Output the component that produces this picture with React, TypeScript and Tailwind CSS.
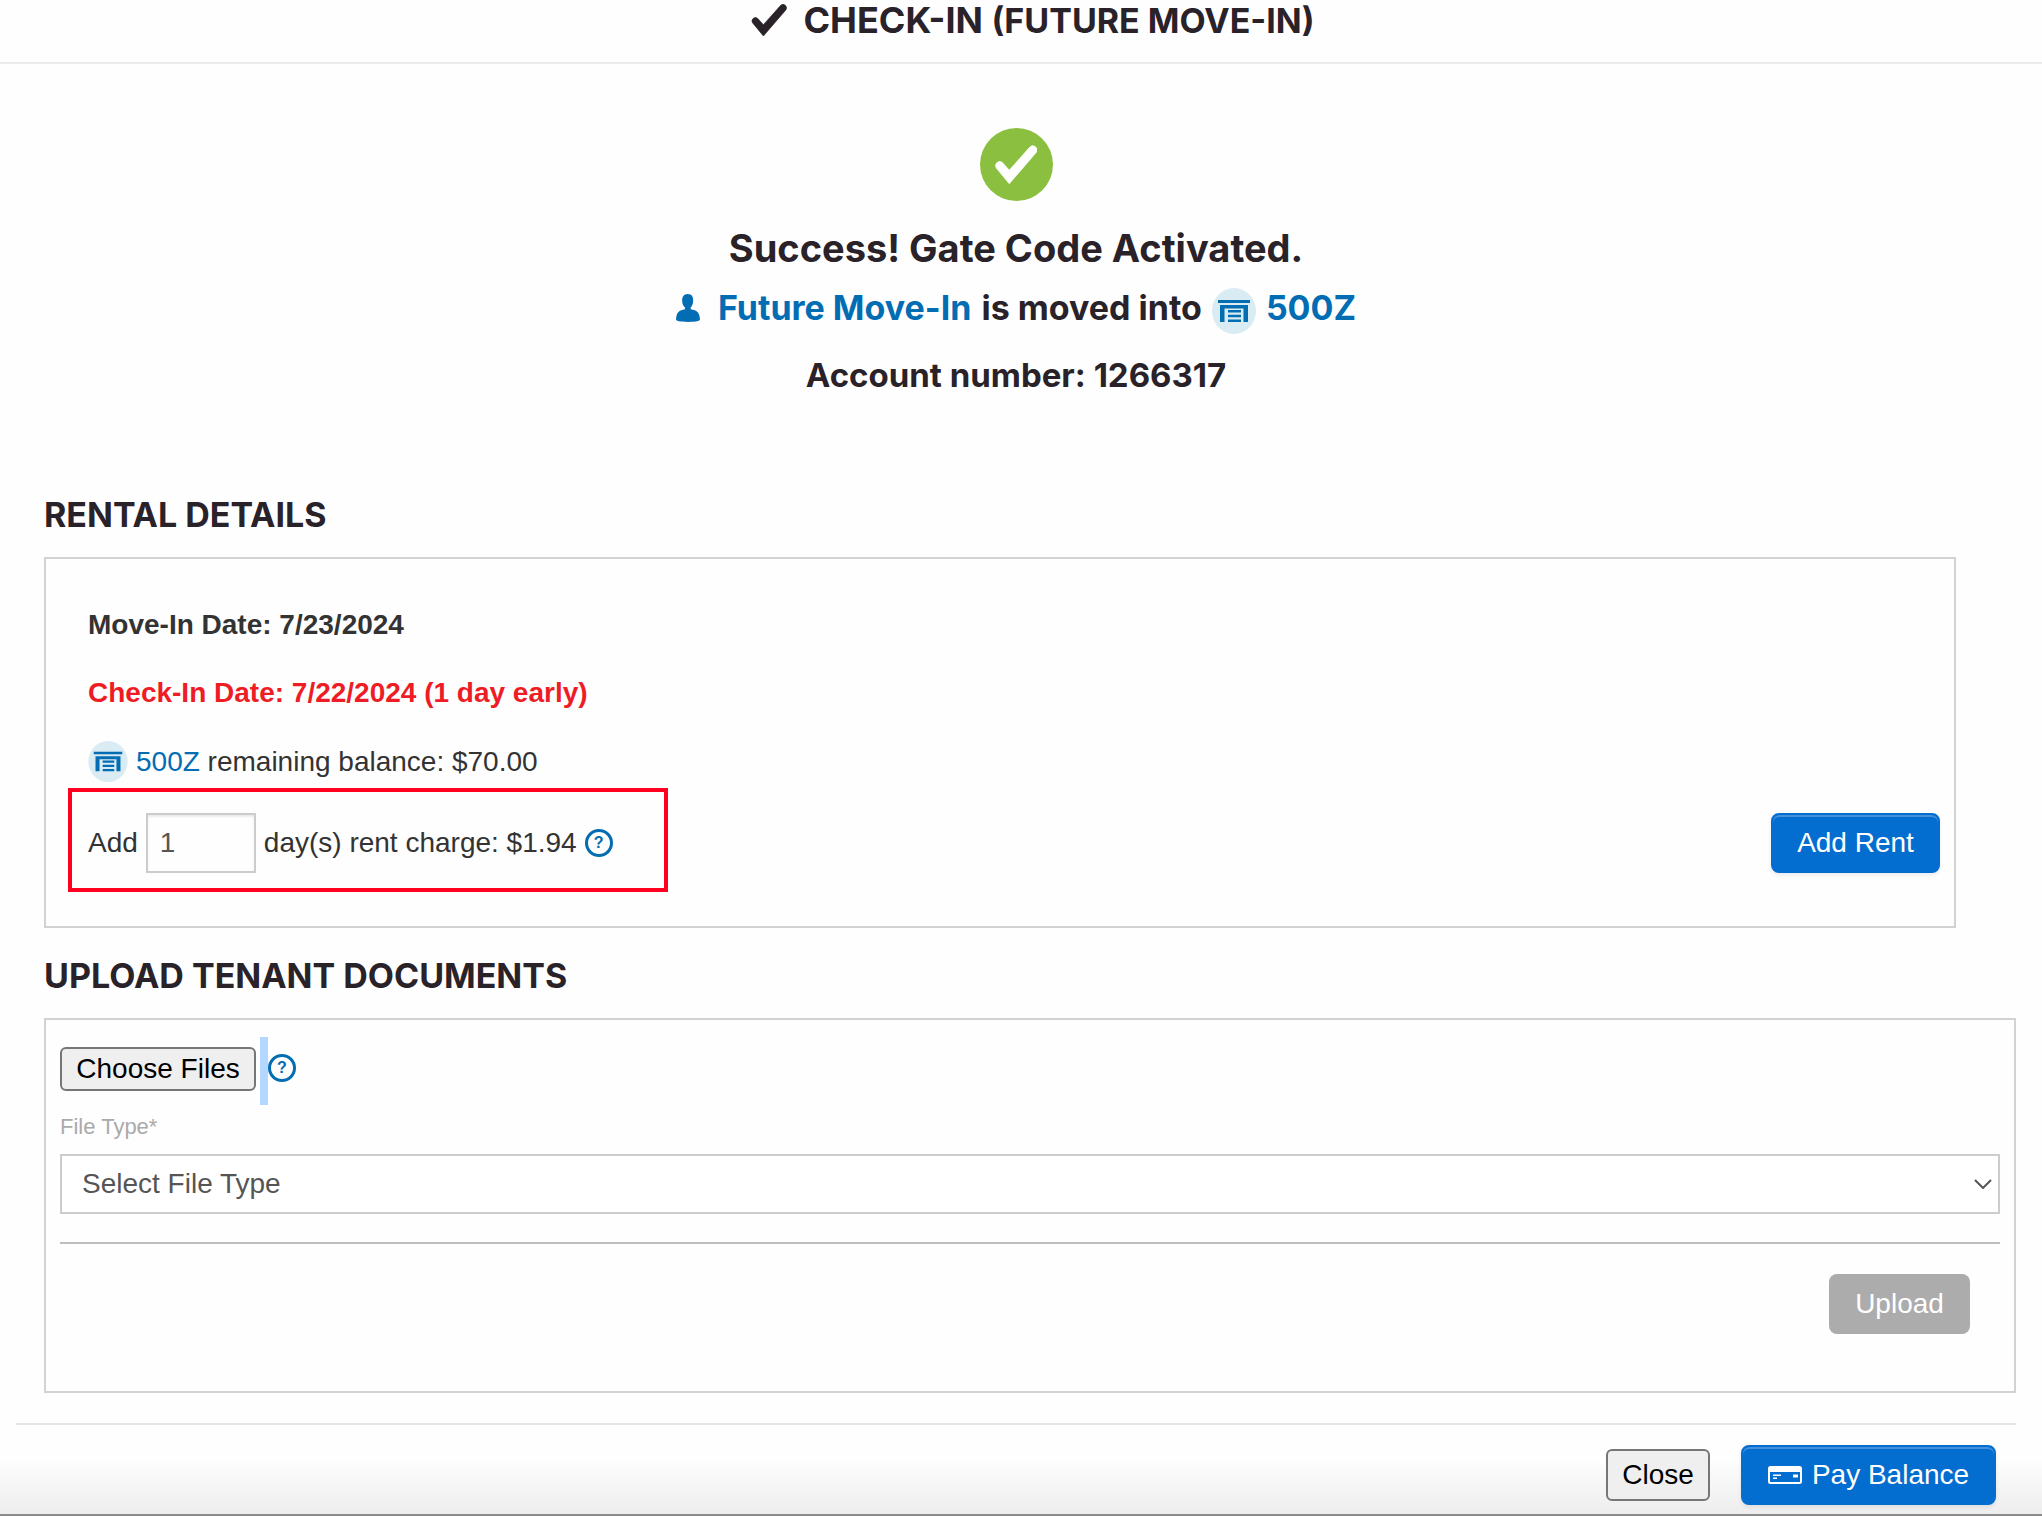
import React from "react";

const heading = "font-['Inter',sans-serif] font-bold text-[#2a2229]";

function CheckMark({ className }: { className?: string }) {
  return (
    <svg viewBox="26 8 106 97" className={className} aria-hidden="true">
      <path d="M29 65A10.500 10.500 0 0 1 44 51L62 71L114 12.500A10.500 10.500 0 0 1 130 26L62 105Z" fill="currentColor" stroke="currentColor" strokeWidth="2" />
    </svg>
  );
}

function UnitIcon({ className }: { className?: string }) {
  return (
    <svg viewBox="0 0 44 46" className={className} aria-hidden="true">
      <ellipse cx="22" cy="23" rx="22" ry="23" fill="#d9ebf3" />
      <g fill="#036db3">
        <path d="M6 12h32v3H6zM8 17h28v17h-4.500V20.500h-19V34H8z" />
        <path d="M16 22h13v2.500H16zM16 26.700h13v2.500H16zM16 31.500h13V34H16z" />
      </g>
    </svg>
  );
}

function PersonIcon({ className }: { className?: string }) {
  return (
    <svg viewBox="30 26 70 82" className={className} fill="currentColor" aria-hidden="true">
      <path d="M64 26C76 26 81 34 80 47C80 56 76 62 73 65V71C91 74 99 80 100 101C100 105 90 108 65 108S30 105 30 101C31 80 39 74 56 71V65C52 62 48 56 48 47C47 34 53 26 64 26Z" />
    </svg>
  );
}

function HelpButton({ className = "" }: { className?: string }) {
  return (
    <button type="button" aria-label="Help" className={`${className} flex size-7 items-center justify-center rounded-full border-3 border-[#036db3] text-base leading-none font-bold text-[#036db3]`}>
      ?
    </button>
  );
}

function CardIcon() {
  return (
    <svg viewBox="0 0 34 18" className="h-[18px] w-[34px]" aria-hidden="true">
      <rect x="1" y="1" width="32" height="16" rx="1.500" fill="none" stroke="#fff" strokeWidth="2" />
      <path d="M1 1h32v5H1zM5 8.500h8v1.500H5zM5 11.500h4v1.500H5zM25 8.500h5v3h-5z" fill="#fff" />
    </svg>
  );
}

const primary =
  "flex h-15 items-center justify-center rounded-lg border-2 border-[#046dd0] bg-[#046dd0] text-white shadow-[inset_0_2px_0_rgba(255,255,255,0.25),0_2px_4px_rgba(0,0,0,0.08)]";

export default function App() {
  return (
    <div className="flex min-h-screen flex-col bg-[#fefefe] font-['Liberation_Sans',sans-serif] text-[28px] leading-10 text-[#333]">
      <header className="flex h-16 justify-center border-b-2 border-[#ebebeb] pl-6">
        <h1 className={`${heading} flex h-10 items-center text-[36px] whitespace-nowrap`}>
          <CheckMark className="mr-4 h-8 w-9" />
          <span>
            CHECK-IN <span className="text-[34px]">(FUTURE MOVE-IN)</span>
          </span>
        </h1>
      </header>

      <main className="flex flex-col pr-[26px] pl-4">
        <section className={`${heading} flex flex-col items-center pt-16 text-[34px]`}>
          <div className="flex size-[73px] items-center justify-center rounded-full bg-[#8bbf3f] text-white">
            <CheckMark className="h-[39px] w-[42px]" />
          </div>
          <h2 className="mt-[27px] text-[38px]">Success! Gate Code Activated.</h2>
          <p className="mt-5 flex h-10 items-center gap-2.5 whitespace-nowrap">
            <PersonIcon className="mr-2 h-7 w-6 text-[#036db3]" />
            <a href="#tenant" className="text-[#036db3]">Future Move-In</a>
            <span>is moved into</span>
            <UnitIcon className="mt-1.5 h-[46px] w-11" />
            <a href="#unit" className="text-[#036db3]">500Z</a>
          </p>
          <p className="mt-[27px] text-[33px]">Account number: 1266317</p>
        </section>

        <section className="mt-25 pr-[60px] pl-7">
          <h2 className={`${heading} text-[34px]`}>RENTAL DETAILS</h2>
          <div className="mt-[22px] border-2 border-[#d2d2d2] pt-[46px] pr-3.5 pb-[34px] pl-[22px]">
            <p className="pl-5 font-bold">Move-In Date: 7/23/2024</p>
            <p className="mt-7 pl-5 font-bold text-[#ee1c25]">Check-In Date: 7/22/2024 (1 day early)</p>
            <p className="mt-7 flex items-center gap-2 pl-5">
              <UnitIcon className="h-[41px] w-10" />
              <span><a href="#unit" className="text-[#036db3]">500Z</a> remaining balance: $70.00</span>
            </p>
            <div className="mt-1.5 flex items-center justify-between">
              <div className="flex h-26 w-[600px] items-center border-4 border-[#ff0020] pt-1.5 pl-4">
                <label htmlFor="days">Add</label>
                <input id="days" defaultValue="1" className="mx-2 h-15 w-[110px] border-2 border-[#ccc] px-3 text-[#555] shadow-[inset_0_2px_2px_rgba(0,0,0,0.08)]" />
                <span className="mr-2">day(s) rent charge: $1.94</span>
                <HelpButton />
              </div>
              <button type="button" className={`${primary} mt-1.5 w-[169px]`}>Add Rent</button>
            </div>
          </div>
        </section>

        <section className="mt-7 pl-7">
          <h2 className={`${heading} text-[34px]`}>UPLOAD TENANT DOCUMENTS</h2>
          <div className="mt-[22px] border-2 border-[#d2d2d2] px-3.5 pt-[17px] pb-[57px]">
            <div className="flex h-17 items-center">
              <button type="button" className="mr-1 mb-1 flex h-11 w-49 items-center justify-center rounded-md border-2 border-[#767676] bg-[#efefef] text-black">Choose Files</button>
              <span className="h-17 w-2 bg-[#b4d7ff]" />
              <HelpButton className="mb-1.5" />
            </div>
            <label htmlFor="file-type" className="mt-0.5 block text-[22px] text-[#aaa]">File Type*</label>
            <div className="relative mt-[7px]">
              <select id="file-type" className="h-15 w-full appearance-none border-2 border-[#ccc] bg-white px-5 text-[#555]">
                <option>Select File Type</option>
              </select>
              <svg viewBox="0 0 18 10" className="pointer-events-none absolute top-[25px] right-2 h-2.5 w-[18px]" aria-hidden="true">
                <path d="M1 1l8 8 8-8" fill="none" stroke="#555" strokeWidth="2" />
              </svg>
            </div>
            <hr className="mt-7 border-t-2 border-[#bfbfbf]" />
            <div className="mt-7.5 flex justify-end pr-7.5">
              <button type="button" disabled className="h-15 w-[141px] rounded-lg bg-[#acacac] text-white">Upload</button>
            </div>
          </div>
        </section>
      </main>

      <footer className="mt-7.5 flex grow flex-col border-b-2 border-[#8c8c8c] bg-linear-to-b from-[#fefefe] from-40% to-[#ededed] pr-[26px] pl-4">
        <div className="flex items-center justify-end gap-[31px] border-t-2 border-[#e5e5e5] pt-5 pr-5 pb-2">
          <button type="button" className="flex h-13 w-26 items-center justify-center rounded-md border-2 border-[#767676] bg-[#efefef] text-black">Close</button>
          <button type="button" className={`${primary} w-[255px] gap-2.5`}>
            <CardIcon />
            Pay Balance
          </button>
        </div>
      </footer>
    </div>
  );
}
